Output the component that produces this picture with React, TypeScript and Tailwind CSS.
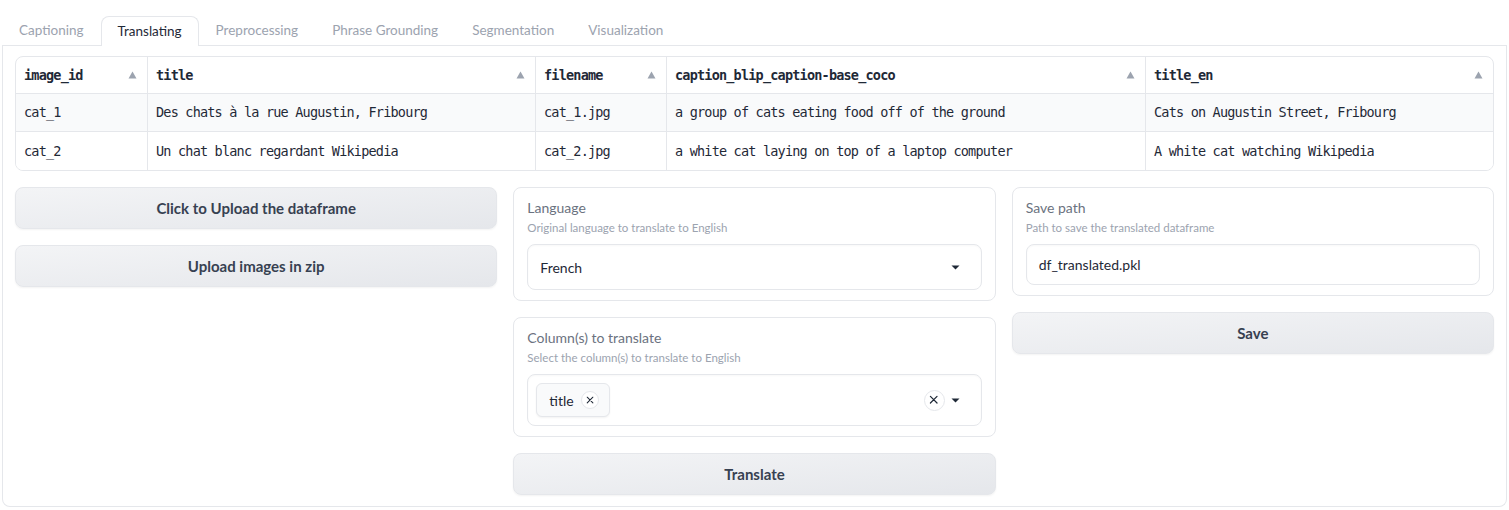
const tabs = ["Captioning", "Translating", "Preprocessing", "Phrase Grounding", "Segmentation", "Visualization"];

const columns = ["image_id", "title", "filename", "caption_blip_caption-base_coco", "title_en"];

const rows = [
  ["cat_1", "Des chats à la rue Augustin, Fribourg", "cat_1.jpg", "a group of cats eating food off of the ground", "Cats on Augustin Street, Fribourg"],
  ["cat_2", "Un chat blanc regardant Wikipedia", "cat_2.jpg", "a white cat laying on top of a laptop computer", "A white cat watching Wikipedia"],
];

const grid = "grid grid-cols-[131px_388px_131px_479px_1fr]";

function SortArrow() {
  return (
    <svg width="9" height="8" viewBox="0 0 9 8" className="shrink-0">
      <path d="M4.5 0.5 L8.5 7.5 L0.5 7.5 Z" fill="#9ca3af" />
    </svg>
  );
}

function Caret() {
  return (
    <svg width="9" height="5" viewBox="0 0 9 5">
      <path d="M0.5 0.5 L8.5 0.5 L4.5 4.5 Z" fill="#1f2937" />
    </svg>
  );
}

function Button({ label }: { label: string }) {
  return (
    <button className="h-[42px] w-full rounded-lg border border-gray-200 bg-gradient-to-br from-[#f3f4f6] to-[#e5e7eb] text-[15px] font-bold text-[#374151] shadow-[0_1px_2px_rgba(0,0,0,0.05)]">
      {label}
    </button>
  );
}

function Block({ label, info, children }: { label: string; info: string; children: React.ReactNode }) {
  return (
    <div className="rounded-lg border border-gray-200 bg-white px-[13px] pt-[10px] pb-[10px]">
      <div className="text-[14px] leading-[20px] text-[#6b7280]">{label}</div>
      <div className="mt-[2px] text-[11.5px] leading-[16px] text-[#9ca3af]">{info}</div>
      <div className="mt-2">{children}</div>
    </div>
  );
}

function XCircle({ size }: { size: number }) {
  return (
    <span
      className="flex items-center justify-center rounded-full border border-gray-200 bg-white"
      style={{ width: size, height: size }}
    >
      <svg width={size * 0.45} height={size * 0.45} viewBox="0 0 10 10">
        <path d="M1.5 1.5 L8.5 8.5 M8.5 1.5 L1.5 8.5" stroke="#1f2937" strokeWidth="1.3" strokeLinecap="round" />
      </svg>
    </span>
  );
}

export default function App() {
  return (
    <div className="min-h-[510px] bg-white px-[2px] pt-[16px] font-['Lato','Open_Sans',sans-serif]">
      {/* Tabs */}
      <div className="flex border-b border-gray-200">
        {tabs.map((t, i) =>
          i === 1 ? (
            <div
              key={t}
              className="-mb-px flex h-[30px] items-center rounded-t-lg border border-b-0 border-gray-200 bg-white px-[16px] text-[13.5px] text-[#1f2937]"
            >
              {t}
            </div>
          ) : (
            <div key={t} className="flex h-[29px] items-center px-[17px] text-[13.5px] text-[#9ca3af]">
              {t}
            </div>
          )
        )}
      </div>

      {/* Panel */}
      <div className="rounded-b-lg border border-t-0 border-gray-200 px-3 pt-[10px] pb-[11px]">
        {/* Dataframe */}
        <div className="overflow-hidden rounded-lg border border-gray-200 font-['DejaVu_Sans_Mono',monospace] text-[13.5px] tracking-[-0.8px] text-[#1f2937]">
          <div className={`${grid} h-[37px] border-b border-gray-200`}>
            {columns.map((c, i) => (
              <div
                key={c}
                className={`flex items-center justify-between pl-[8px] pr-[10px] font-bold ${i > 0 ? "border-l border-gray-200" : ""}`}
              >
                <span>{c}</span>
                <SortArrow />
              </div>
            ))}
          </div>
          {rows.map((r, ri) => (
            <div
              key={ri}
              className={`${grid} h-[38px] ${ri === 0 ? "border-b border-gray-200 bg-[#f9fafb]" : "bg-white"}`}
            >
              {r.map((cell, i) => (
                <div
                  key={i}
                  className={`flex items-center pl-[8px] ${i > 0 ? "border-l border-gray-200" : ""}`}
                >
                  {cell}
                </div>
              ))}
            </div>
          ))}
        </div>

        {/* Controls */}
        <div className="mt-4 grid grid-cols-3 items-start gap-4">
          <div className="flex flex-col gap-4">
            <Button label="Click to Upload the dataframe" />
            <Button label="Upload images in zip" />
          </div>

          <div className="flex flex-col gap-4">
            <Block label="Language" info="Original language to translate to English">
              <div className="flex h-[46px] items-center justify-between rounded-lg border border-gray-200 pl-[12px] pr-[21px] text-[14px] text-[#1f2937] shadow-[inset_0_1px_2px_rgba(0,0,0,0.03)]">
                <span>French</span>
                <Caret />
              </div>
            </Block>
            <Block label="Column(s) to translate" info="Select the column(s) to translate to English">
              <div className="flex h-[52px] items-center justify-between rounded-lg border border-gray-200 pl-[8px] pr-[21px] shadow-[inset_0_1px_2px_rgba(0,0,0,0.03)]">
                <div className="flex h-[34px] items-center gap-[7px] rounded-md border border-gray-200 bg-[#f9fafb] pl-[12px] pr-[10px] text-[14px] text-[#1f2937] shadow-[0_1px_2px_rgba(0,0,0,0.05)]">
                  <span>title</span>
                  <XCircle size={18} />
                </div>
                <div className="flex items-center gap-[6px]">
                  <XCircle size={21} />
                  <Caret />
                </div>
              </div>
            </Block>
            <Button label="Translate" />
          </div>

          <div className="flex flex-col gap-4">
            <Block label="Save path" info="Path to save the translated dataframe">
              <div className="flex h-[41px] items-center rounded-lg border border-gray-200 pl-[12px] text-[14px] text-[#1f2937] shadow-[inset_0_1px_2px_rgba(0,0,0,0.03)]">
                df_translated.pkl
              </div>
            </Block>
            <Button label="Save" />
          </div>
        </div>
      </div>
    </div>
  );
}
